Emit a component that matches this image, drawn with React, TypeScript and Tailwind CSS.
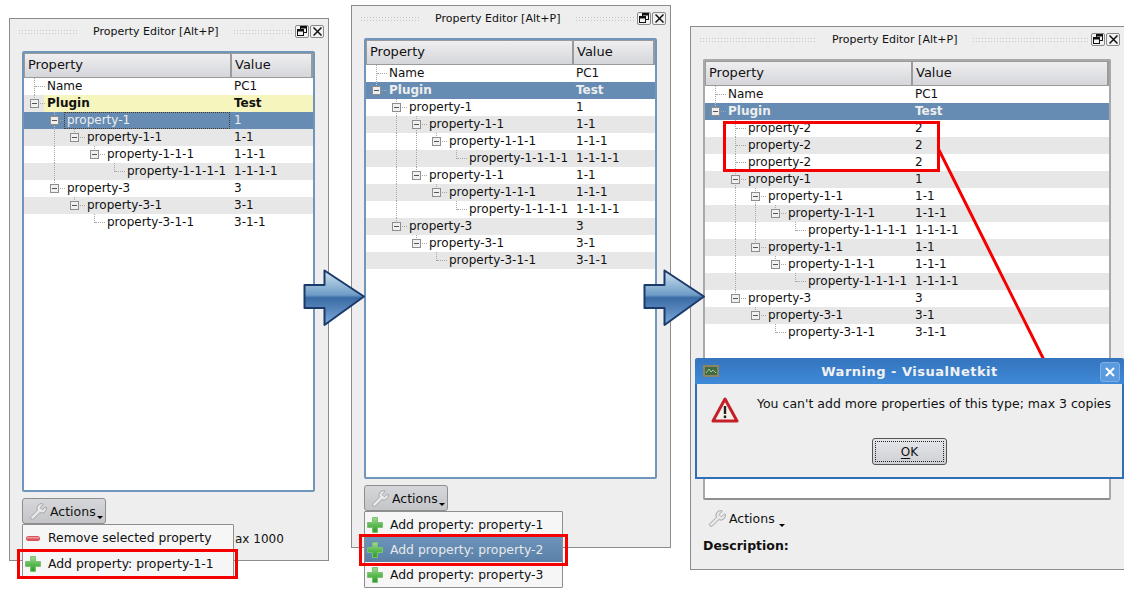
import type { ReactNode } from "react";
import { Wrench } from "lucide-react";

type Row = {
  depth: number;
  label: string;
  value: string;
  kids?: boolean;
  bold?: boolean;
  tone?: "selected" | "hover";
  focus?: boolean;
};

const rowsFirst: Row[] = [
  { depth: 0, label: "Name", value: "PC1" },
  { depth: 0, label: "Plugin", value: "Test", kids: true, bold: true, tone: "hover" },
  { depth: 1, label: "property-1", value: "1", kids: true, tone: "selected", focus: true },
  { depth: 2, label: "property-1-1", value: "1-1", kids: true },
  { depth: 3, label: "property-1-1-1", value: "1-1-1", kids: true },
  { depth: 4, label: "property-1-1-1-1", value: "1-1-1-1" },
  { depth: 1, label: "property-3", value: "3", kids: true },
  { depth: 2, label: "property-3-1", value: "3-1", kids: true },
  { depth: 3, label: "property-3-1-1", value: "3-1-1" },
];

const middle: Row[] = [
  { depth: 1, label: "property-1", value: "1", kids: true },
  { depth: 2, label: "property-1-1", value: "1-1", kids: true },
  { depth: 3, label: "property-1-1-1", value: "1-1-1", kids: true },
  { depth: 4, label: "property-1-1-1-1", value: "1-1-1-1" },
  { depth: 2, label: "property-1-1", value: "1-1", kids: true },
  { depth: 3, label: "property-1-1-1", value: "1-1-1", kids: true },
  { depth: 4, label: "property-1-1-1-1", value: "1-1-1-1" },
  { depth: 1, label: "property-3", value: "3", kids: true },
  { depth: 2, label: "property-3-1", value: "3-1", kids: true },
  { depth: 3, label: "property-3-1-1", value: "3-1-1" },
];

const head: Row[] = [
  { depth: 0, label: "Name", value: "PC1" },
  { depth: 0, label: "Plugin", value: "Test", kids: true, bold: true, tone: "selected" },
];

const rowsSecond: Row[] = [...head, ...middle];

const rowsThird: Row[] = [
  ...head,
  { depth: 1, label: "property-2", value: "2" },
  { depth: 1, label: "property-2", value: "2" },
  { depth: 1, label: "property-2", value: "2" },
  ...middle,
];

function continues(rows: Row[], i: number, level: number) {
  for (let j = i + 1; j < rows.length; j++) {
    if (rows[j].depth < level) return false;
    if (rows[j].depth === level) return true;
  }
  return false;
}

function TreeRow({ rows, i }: { rows: Row[]; i: number }) {
  const row = rows[i];
  const x = 10 + row.depth * 20;
  const selected = row.tone === "selected";
  const levels = Array.from({ length: row.depth + 1 }, (_, k) => k);

  return (
    <div className={`relative flex h-[17px] items-center pb-[2px] ${selected ? "bg-[#668cb3] text-[#eeeeee]" : i % 2 ? "bg-[#e7e7e7]" : "bg-white"}`}>
      {row.tone === "hover" && <span className="absolute inset-y-0 left-[20px] right-0 bg-[#f5f5bd]" />}
      {levels.map((k) => {
        const through = continues(rows, i, k);
        if (k < row.depth && !through) return null;
        return (
          <span
            key={k}
            className={`absolute top-0 w-0 border-l border-dotted ${selected ? "border-[#c8c8c8]" : "border-[#a8a8a8]"} ${through ? "h-[17px]" : "h-[9px]"}`}
            style={{ left: 10 + k * 20 }}
          />
        );
      })}
      <span className="absolute top-[8px] h-0 w-[10px] border-t border-dotted border-[#a8a8a8]" style={{ left: x + 1 }} />
      {row.kids && (
        <span
          className={`absolute top-[4px] flex h-[9px] w-[9px] items-center justify-center border border-[#8e8e8e] ${selected ? "bg-[#eeeeee]" : "bg-[#f0f0f0]"}`}
          style={{ left: x - 4 }}
        >
          <span className="h-px w-[5px] bg-[#555555]" />
        </span>
      )}
      {row.focus && (
        <span className="absolute inset-y-0 w-[166px] border border-dotted border-[#4a3a28]" style={{ left: x + 10 }} />
      )}
      <span className={`relative w-[210px] shrink-0 whitespace-nowrap ${row.bold ? "font-bold" : ""}`} style={{ paddingLeft: x + 13 }}>
        {row.label}
      </span>
      <span className={`relative whitespace-nowrap ${row.bold ? "font-bold" : ""}`}>{row.value}</span>
    </div>
  );
}

function Grip({ className }: { className: string }) {
  return (
    <span className={`h-[5px] bg-[radial-gradient(circle,#c4c4c4_0.8px,transparent_1px)] bg-[length:3px_3px] ${className}`} />
  );
}

function TitleButtons() {
  return (
    <span className="flex gap-px">
      <span className="flex h-[13px] w-[14px] items-center justify-center rounded-[2px] border border-[#8a8a8a] bg-[#f2f2f2]">
        <svg width="10" height="10" viewBox="0 0 10 10" fill="none" stroke="#111" strokeWidth="1">
          <rect x="3.5" y="0.5" width="6" height="6" />
          <rect x="3.5" y="0.5" width="6" height="1.5" fill="#111" />
          <rect x="0.5" y="3.5" width="6" height="6" fill="#f2f2f2" />
          <rect x="0.5" y="3.5" width="6" height="1.5" fill="#111" />
        </svg>
      </span>
      <span className="flex h-[13px] w-[14px] items-center justify-center rounded-[2px] border border-[#8a8a8a] bg-[#f2f2f2]">
        <svg width="9" height="9" viewBox="0 0 9 9" stroke="#111" strokeWidth="1.5">
          <path d="M0.5 0.5 L8.5 8.5 M8.5 0.5 L0.5 8.5" />
        </svg>
      </span>
    </span>
  );
}

function PropertyTable({ rows, width }: { rows: Row[]; width: string }) {
  return (
    <div className={`flex h-[441px] shrink-0 flex-col rounded-[2px] border-2 bg-white ${width} ${rows === rowsThird ? "border-[#a9a9a9] border-b-[#8f8f8f]" : "border-[#7196bb]"}`}>
      <div className="flex h-[25px] shrink-0 bg-gradient-to-b from-[#f0f0f2] to-[#d4d5d9] text-[13px]">
        <div className="flex w-[208px] items-center border-r-2 border-b border-l border-t border-[#9a9a9a] pb-[2px] pl-[3px]">Property</div>
        <div className="flex flex-1 items-center border-r-2 border-b border-t border-[#9a9a9a] pb-[2px] pl-[3px]">Value</div>
      </div>
      {rows.map((row, i) => (
        <TreeRow key={i} rows={rows} i={i} />
      ))}
    </div>
  );
}

function ActionsButton({ flat }: { flat?: boolean }) {
  return (
    <div className={`relative flex h-[26px] w-[84px] items-center text-[12.5px] ${flat ? "pl-[5px]" : "rounded-[3px] border border-[#8e8e8e] bg-gradient-to-b from-[#d6d7da] to-[#c4c5c9] pl-[6px]"}`}>
      <Wrench size={19} strokeWidth={1.2} fill="#e8e8e8" className="text-[#a0a0a0]" />
      <span className="ml-[2px] pt-[2px]">Actions</span>
      <span className="absolute bottom-[4px] right-[2px] h-0 w-0 border-x-[3px] border-t-[3px] border-x-transparent border-t-black" />
    </div>
  );
}

function Plus() {
  return (
    <svg width="18" height="18" viewBox="0 0 18 18" className="shrink-0">
      <defs>
        <linearGradient id="plusFill" x1="0" y1="0" x2="0" y2="1">
          <stop offset="0" stopColor="#a4d896" />
          <stop offset="0.5" stopColor="#5cbb52" />
          <stop offset="1" stopColor="#2f9a2c" />
        </linearGradient>
      </defs>
      <path d="M6.5 1.5h5v5h5v5h-5v5h-5v-5h-5v-5h5z" fill="url(#plusFill)" stroke="#7cc072" strokeWidth="1" strokeLinejoin="round" />
    </svg>
  );
}

function Minus() {
  return (
    <svg width="18" height="18" viewBox="0 0 18 18" className="shrink-0">
      <rect x="2" y="7" width="14" height="5" rx="2.5" fill="#d9535b" />
      <rect x="3" y="8" width="12" height="1.5" rx="0.7" fill="#ee9a9e" />
    </svg>
  );
}

function MenuItem({ icon, label, active }: { icon: ReactNode; label: string; active?: boolean }) {
  return (
    <div className={`flex h-[25px] items-center gap-[6px] pl-[1px] text-[12.4px] ${active ? "bg-gradient-to-b from-[#6d94bb] to-[#5a80a8] text-[#e8e8e8]" : ""}`}>
      {icon}
      <span className="whitespace-nowrap pt-[1px]">{label}</span>
    </div>
  );
}

function Menu({ className, children }: { className: string; children: ReactNode }) {
  return <div className={`absolute z-10 rounded-[1px] border border-[#8e8e8e] bg-[#f6f6f6] ${className}`}>{children}</div>;
}

function PanelTitle({ grip }: { grip: string }) {
  return (
    <div className="-mx-[12px] flex h-[32px] shrink-0 items-center pb-[8px] pl-[8px] pr-[4px] text-[11px]">
      <Grip className={grip} />
      <span className="mx-[15px] whitespace-nowrap">Property Editor [Alt+P]</span>
      <Grip className={grip} />
      <span className="ml-auto">
        <TitleButtons />
      </span>
    </div>
  );
}

function RedBox({ className }: { className: string }) {
  return <div className={`absolute z-20 border-[3px] border-[#f40000] ${className}`} />;
}

function Arrow({ className }: { className: string }) {
  return (
    <svg width="63" height="58" viewBox="0 0 63 58" className={`absolute z-20 ${className}`}>
      <defs>
        <linearGradient id="arrowFill" x1="0" y1="0" x2="0" y2="1">
          <stop offset="0" stopColor="#cfe3ef" />
          <stop offset="0.45" stopColor="#6d9cc6" />
          <stop offset="0.5" stopColor="#3a6ba4" />
          <stop offset="1" stopColor="#7ea9dc" />
        </linearGradient>
      </defs>
      <path d="M21.5 1.5 L61 27.5 L21.5 56 V39 H1.5 V16 H21.5 Z" fill="url(#arrowFill)" stroke="#1b3a6b" strokeWidth="2" strokeLinejoin="round" />
    </svg>
  );
}

export default function App() {
  return (
    <div className="relative h-[593px] w-[1133px] overflow-hidden bg-white font-['DejaVu_Sans',sans-serif] text-[12px] leading-none text-[#111111]">
      {/* first window */}
      <div className="absolute left-[9px] top-[18px] flex h-[543px] w-[320px] flex-col border border-[#8c8c8c] bg-[#eeeeee] px-[12px]">
        <PanelTitle grip="w-[60px]" />
        <PropertyTable rows={rowsFirst} width="w-[293px]" />
        <div className="mt-[6px]">
          <ActionsButton />
        </div>
        <span className="absolute left-[225px] top-[514px] text-[12px]">ax 1000</span>
        <Menu className="left-[12px] top-[505px] w-[212px]">
          <MenuItem icon={<Minus />} label="Remove selected property" />
          <div className="mx-[5px] h-px bg-[#bdbdbd]" />
          <MenuItem icon={<Plus />} label="Add property: property-1-1" />
        </Menu>
      </div>

      {/* second window */}
      <div className="absolute left-[351px] top-[5px] flex h-[543px] w-[320px] flex-col border border-[#8c8c8c] bg-[#eeeeee] px-[12px]">
        <PanelTitle grip="w-[60px]" />
        <PropertyTable rows={rowsSecond} width="w-[293px]" />
        <div className="mt-[6px]">
          <ActionsButton />
        </div>
        <Menu className="left-[12px] top-[505px] w-[199px]">
          <MenuItem icon={<Plus />} label="Add property: property-1" />
          <MenuItem icon={<Plus />} label="Add property: property-2" active />
          <MenuItem icon={<Plus />} label="Add property: property-3" />
        </Menu>
      </div>

      {/* third window */}
      <div className="absolute left-[690px] top-[26px] flex h-[544px] w-[434px] flex-col border-y border-l border-[#8c8c8c] bg-[#eeeeee] px-[12px]">
        <PanelTitle grip="w-[118px]" />
        <PropertyTable rows={rowsThird} width="w-[408px]" />
        <div className="mt-[5px]">
          <ActionsButton flat />
        </div>
        <span className="mt-[9px] text-[12.5px] font-bold">Description:</span>
      </div>

      <Arrow className="left-[303px] top-[269px]" />
      <Arrow className="left-[643px] top-[269px]" />

      <RedBox className="left-[17px] top-[549px] h-[30px] w-[221px]" />
      <RedBox className="left-[359px] top-[534px] h-[32px] w-[209px]" />
      <RedBox className="left-[723px] top-[121px] h-[51px] w-[217px]" />
      <svg width="1133" height="593" className="pointer-events-none absolute left-0 top-0 z-20">
        <line x1="939" y1="150" x2="1044" y2="360" stroke="#f40000" strokeWidth="3" />
      </svg>

      {/* warning dialog */}
      <div className="absolute left-[695px] top-[358px] z-30 flex h-[121px] w-[429px] flex-col rounded-t-[3px] border-2 border-t-0 border-[#2f6fb8] bg-[#eeeeee]">
        <div className="relative -mx-[2px] flex h-[26px] shrink-0 items-center justify-center rounded-t-[3px] bg-gradient-to-b from-[#3474bd] to-[#3f8ad8] text-[13px] font-bold text-[#f2f2f2]">
          <svg width="16" height="12" viewBox="0 0 16 12" className="absolute left-[8px] top-[7px]">
            <rect width="16" height="12" fill="#8f8460" />
            <rect x="2" y="2" width="12" height="8" fill="#3f6b45" />
            <path d="M3 8l3-4 2 3 2-2 3 3" stroke="#a8c48c" strokeWidth="1" fill="none" />
          </svg>
          <span className="tracking-[0.5px]">Warning - VisualNetkit</span>
          <span className="absolute right-[4px] top-[4px] flex h-[20px] w-[20px] items-center justify-center rounded-[3px] border border-[#7fb0e4] bg-[#5a9be0]">
            <svg width="10" height="10" viewBox="0 0 10 10" stroke="#ffffff" strokeWidth="2">
              <path d="M1 1 L9 9 M9 1 L1 9" />
            </svg>
          </span>
        </div>
        <div className="flex h-[28px] items-start pl-[14px] pt-[13px]">
          <svg width="28" height="28" viewBox="0 0 28 28" className="shrink-0">
            <path d="M14 2 L26 24 H2 Z" fill="#f4f0ea" stroke="#c5202a" strokeWidth="3" strokeLinejoin="round" />
            <rect x="12.8" y="9" width="2.4" height="8" fill="#222222" />
            <rect x="12.8" y="18.5" width="2.4" height="2.6" fill="#222222" />
          </svg>
          <span className="ml-[18px] mt-[1px] whitespace-nowrap text-[12.5px]">You can't add more properties of this type; max 3 copies</span>
        </div>
        <div className="mt-[26px] flex justify-center">
          <div className="flex h-[27px] w-[75px] items-center justify-center rounded-[3px] border border-[#555555] bg-gradient-to-b from-[#e6e7ea] to-[#cfd0d5] p-[2px]">
            <span className="flex h-full w-full items-center justify-center border border-dotted border-[#222222]">
              <span className="underline underline-offset-2">O</span>K
            </span>
          </div>
        </div>
      </div>
    </div>
  );
}
